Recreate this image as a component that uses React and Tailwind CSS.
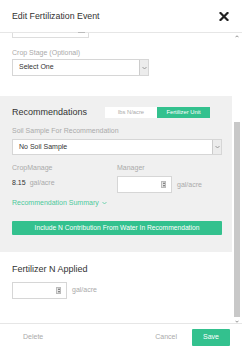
import React from "react";

const Chevron = () => (
  <svg width="5" height="4" viewBox="0 0 10 6" fill="none" stroke="#888" strokeWidth="1.6">
    <path d="M1 1l4 4 4-4" />
  </svg>
);

const SelectBox = ({ text, className }) => (
  <div className={`flex border border-[#d6d6d6] bg-white ${className}`}>
    <div className="flex-1 flex items-center pl-[6px] text-[7px] text-[#333]">{text}</div>
    <div className="w-[9px] flex items-center justify-center bg-[#ececec] border-l border-[#ccc]">
      <Chevron />
    </div>
  </div>
);

const Spinner = () => (
  <div className="w-[5px] h-[7px] bg-[#e4e4e4] border border-[#bbb] flex flex-col items-center justify-center gap-[1px]">
    <div className="w-0 h-0 border-l-[1.5px] border-r-[1.5px] border-b-[2px] border-l-transparent border-r-transparent border-b-[#666]" />
    <div className="w-0 h-0 border-l-[1.5px] border-r-[1.5px] border-t-[2px] border-l-transparent border-r-transparent border-t-[#666]" />
  </div>
);

const NumInput = ({ className }) => (
  <div className={`w-[55px] h-[17px] border border-[#d6d6d6] bg-white flex items-center justify-end pr-[5px] ${className}`}>
    <Spinner />
  </div>
);

export default function App() {
  return (
    <div className="w-[242px] h-[350px] bg-white flex flex-col overflow-hidden font-['Liberation_Sans',Arial,sans-serif]">
      <div className="h-[33px] shrink-0 border-b border-[#e6e6e6] flex items-center justify-between pl-[12px] pr-[13px]">
        <span className="text-[8.8px] text-[#333] leading-none">Edit Fertilization Event</span>
        <svg width="10" height="9" viewBox="0 0 10 9" stroke="#222" strokeWidth="2.2" strokeLinecap="square">
          <path d="M1.5 1l7 7M8.5 1l-7 7" />
        </svg>
      </div>
      <div className="flex flex-1 min-h-0">
        <div className="w-[232px] flex flex-col">
          <div className="ml-[12px] w-[77px] h-[5px] border border-t-0 border-[#ddd] relative">
            <div className="absolute right-[3px] top-[-1px] w-[7px] h-[1px] bg-[#bbb]" />
          </div>
          <div className="ml-[12px] mt-[10px] text-[7px] leading-[9px] text-[#aaa]">Crop Stage (Optional)</div>
          <SelectBox text="Select One" className="ml-[12px] mt-[2px] w-[137px] h-[17px]" />
          <div className="mt-[20px] bg-[#f0f0f0] px-[12px] pt-[10px] pb-[17px] flex flex-col">
            <div className="h-[12px] flex items-center justify-between pr-[10px]">
              <span className="text-[9px] text-[#333] leading-none">Recommendations</span>
              <div className="flex h-[11px]">
                <div className="w-[52px] bg-white flex items-center justify-center text-[5.8px] text-[#aaa]">lbs N/acre</div>
                <div className="w-[53px] bg-[#33c18e] flex items-center justify-center text-[5.8px] text-white">Fertilizer Unit</div>
              </div>
            </div>
            <div className="mt-[8px] text-[7px] leading-[9px] text-[#aaa]">Soil Sample For Recommendation</div>
            <SelectBox text="No Soil Sample" className="mt-[4px] w-[210px] h-[16px]" />
            <div className="mt-[8px] grid grid-cols-[105px_1fr] text-[7px] leading-[9px] text-[#aaa]">
              <span>CropManage</span>
              <span>Manager</span>
            </div>
            <div className="grid grid-cols-[105px_1fr]">
              <div className="mt-[6px] text-[7px] leading-[9px]">
                <span className="text-[#333]">8.15</span>
                <span className="text-[#aaa] ml-[4px]">gal/acre</span>
              </div>
              <div className="mt-[4px] flex items-center">
                <NumInput />
                <span className="ml-[5px] mt-[2px] text-[7px] text-[#aaa]">gal/acre</span>
              </div>
            </div>
            <div className="mt-[5px] flex items-center text-[7px] leading-[9px] text-[#4cc99b]">
              <span>Recommendation Summary</span>
              <svg className="ml-[3px]" width="5" height="4" viewBox="0 0 10 6" fill="none" stroke="#4cc99b" strokeWidth="1.5">
                <path d="M1 1l4 4 4-4" />
              </svg>
            </div>
            <div className="mt-[14px] w-[210px] h-[14px] bg-[#33c18e] rounded-[1px] flex items-center justify-center text-[6.7px] text-white">
              Include N Contribution From Water In Recommendation
            </div>
          </div>
          <div className="ml-[12px] mt-[12px] text-[9px] leading-[11px] text-[#333]">Fertilizer N Applied</div>
          <div className="ml-[12px] mt-[7px] flex items-center">
            <NumInput />
            <span className="ml-[5px] text-[7px] text-[#aaa]">gal/acre</span>
          </div>
        </div>
        <div className="w-[10px] flex flex-col items-center pl-[2px] pr-[2px]">
          <svg className="mt-[2px]" width="4" height="3" viewBox="0 0 8 5" fill="none" stroke="#777" strokeWidth="1.6">
            <path d="M1 4l3-3 3 3" />
          </svg>
          <div className="mt-[84px] w-[6px] h-[195px] bg-[#c8c8c8]" />
          <svg className="mt-[3px]" width="4" height="3" viewBox="0 0 8 5" fill="none" stroke="#777" strokeWidth="1.6">
            <path d="M1 1l3 3 3-3" />
          </svg>
        </div>
      </div>
      <div className="h-[27px] shrink-0 border-t border-[#e6e6e6] flex items-center pl-[23px] pr-[12px] text-[7px]">
        <span className="text-[#aaa]">Delete</span>
        <span className="ml-auto text-[#aaa]">Cancel</span>
        <div className="ml-[15px] w-[38px] h-[17px] bg-[#33c18e] rounded-[1px] flex items-center justify-center text-white">Save</div>
      </div>
    </div>
  );
}
